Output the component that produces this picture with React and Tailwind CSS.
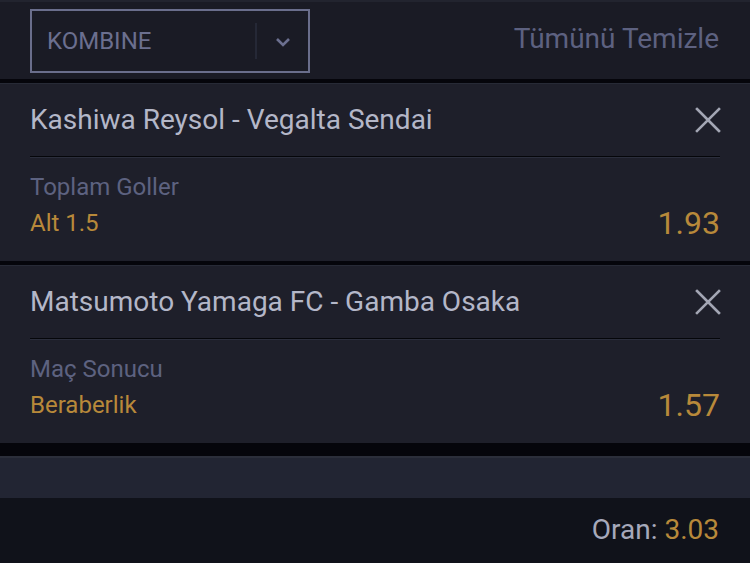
import React from 'react';

const bets = [
  { id: 1, match: 'Kashiwa Reysol - Vegalta Sendai', market: 'Toplam Goller', pick: 'Alt 1.5', odd: '1.93' },
  { id: 2, match: 'Matsumoto Yamaga FC - Gamba Osaka', market: 'Maç Sonucu', pick: 'Beraberlik', odd: '1.57' },
];

const CloseIcon = () => (
  <svg width="26" height="26" viewBox="0 0 26 26" fill="none">
    <path d="M2 2L24 24M24 2L2 24" stroke="#a3a6b4" strokeWidth="2.6" strokeLinecap="square" />
  </svg>
);

const Chevron = () => (
  <svg width="16" height="10" viewBox="0 0 16 10" fill="none">
    <path d="M2 2L8 8L14 2" stroke="#6b6f8f" strokeWidth="2.6" />
  </svg>
);

const BetCard = ({ bet }) => (
  <div className="bg-[#1e1f2a] border-t border-[#272a36] px-[30px]">
    {/* Match title */}
    <div className="h-[72px] flex items-center justify-between">
      <span className="text-[28px] text-[#b4b7c8]">{bet.match}</span>
      <button className="mr-[-1px]">
        <CloseIcon />
      </button>
    </div>
    <div className="h-[2px] border-t border-[#05060a] bg-[#2b2e3c]" />

    {/* Selection */}
    <div className="pt-[11px] pb-[20px] flex items-end justify-between">
      <div className="flex flex-col">
        <span className="h-[36px] leading-[36px] text-[24px] text-[#5d6280]">{bet.market}</span>
        <span className="h-[36px] leading-[36px] text-[24px] text-[#b8893a]">{bet.pick}</span>
      </div>
      <span className="h-[36px] leading-[36px] text-[32px] text-[#b8893a]">{bet.odd}</span>
    </div>
  </div>
);

const App = () => {
  return (
    <div className="w-[750px] h-[563px] bg-[#05050b] flex flex-col font-['Roboto',sans-serif] overflow-hidden">
      {/* Header */}
      <div className="h-[79px] border-t-2 border-[#22242f] bg-[#1a1b25] flex items-center justify-between pl-[30px] pr-[31px]">
        <div className="w-[280px] h-[64px] border-2 border-[#6a6e8c] flex items-center">
          <span className="flex-1 pl-[15px] text-[24px] text-[#6b6f8f]">KOMBINE</span>
          <div className="w-[2px] h-[36px] bg-[#252836]" />
          <div className="w-[51px] flex items-center justify-center pt-[2px]">
            <Chevron />
          </div>
        </div>
        <span className="text-[28px] text-[#5d6180] pb-[3px]">Tümünü Temizle</span>
      </div>

      {/* Bets */}
      <div className="flex flex-col gap-[4px] mt-[4px]">
        {bets.map((bet) => (
          <BetCard key={bet.id} bet={bet} />
        ))}
      </div>

      {/* Stake strip */}
      <div className="mt-[13px] h-[42px] border-t-2 border-[#2b2e3a] bg-[#222533]" />

      {/* Footer */}
      <div className="flex-1 bg-[#10121a] flex items-center justify-end pr-[31px] pb-[2px]">
        <span className="text-[28px] text-[#a6a9bb]">
          Oran: <span className="text-[#b8893a]">3.03</span>
        </span>
      </div>
    </div>
  );
};

export default App;
